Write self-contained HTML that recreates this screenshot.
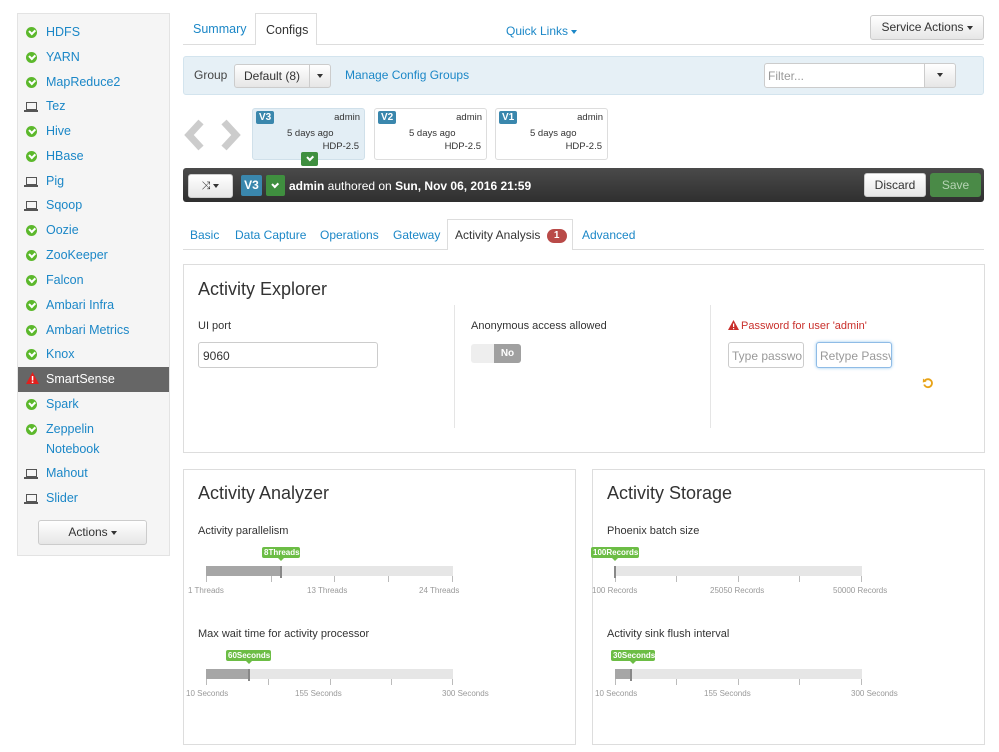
<!DOCTYPE html>
<html><head><meta charset="utf-8"><style>
*{box-sizing:border-box;margin:0;padding:0}
body{width:999px;height:752px;background:#fff;font-family:"Liberation Sans",sans-serif;font-size:12px;color:#333;position:relative;overflow:hidden}
.a{position:absolute}
.lk{color:#1b87c7}
.side{left:17px;top:13px;width:153px;height:543px;background:#f5f5f5;border:1px solid #e3e3e3}
.it{position:absolute;left:28px;font-size:12.5px;color:#1b87c7;white-space:nowrap}
.ok{position:absolute;left:8px;width:11px;height:11px;border-radius:50%;background:#5cb82c;margin-top:-1px}
.ok:after{content:"";position:absolute;left:3px;top:2px;width:4px;height:2.5px;border-left:2px solid #fff;border-bottom:2px solid #fff;transform:rotate(-45deg)}
.pc{position:absolute;left:8px;width:11px;height:8px;border:1.5px solid #555;border-bottom-width:1px}
.pc:after{content:"";position:absolute;left:-3px;top:7px;width:14px;height:1.5px;background:#555}
.btn{position:absolute;background:linear-gradient(#fff,#e6e6e6);border:1px solid #ccc;border-radius:3px;text-align:center;color:#333;font-size:12px}
.car{display:inline-block;width:0;height:0;border-left:3.5px solid transparent;border-right:3.5px solid transparent;border-top:4px solid #333;vertical-align:middle;margin-left:3px}
.ver{position:absolute;top:108px;width:113px;height:52px;border:1px solid #ddd;border-radius:3px;font-size:9.5px;background:#fff}
.vb{position:absolute;left:3px;top:2px;background:#3a87ad;color:#fff;font-weight:bold;font-size:10px;padding:1px 3px;border-radius:2px}
.panel{position:absolute;border:1px solid #ddd}
.h{position:absolute;font-size:18px;color:#333}
.lbl{position:absolute;font-size:11px;color:#333}
.inp{position:absolute;border:1px solid #ccc;border-radius:3px;background:#fff;font-size:12px;padding:6px 4px;color:#999}
.track{position:absolute;height:10px;background:#e6e6e6}
.fill{position:absolute;left:0;top:0;height:10px;background:#a6a6a6}
.tk{position:absolute;top:10px;width:1px;height:6px;background:#bbb}
.tl{position:absolute;font-size:8px;color:#999;white-space:nowrap}
.gb{position:absolute;height:11px;background:#6cbd45;color:#fff;font-size:8px;font-weight:bold;border-radius:2px;line-height:11px;text-align:center;padding:0 2px;white-space:nowrap}
.gb:after{content:"";position:absolute;left:50%;bottom:-3px;margin-left:-3px;border-left:3px solid transparent;border-right:3px solid transparent;border-top:3px solid #6cbd45}
</style></head><body>

<div class="a side">
<div class="ok" style="top:14px"></div><div class="it" style="top:11px">HDFS</div>
<div class="ok" style="top:39px"></div><div class="it" style="top:36px">YARN</div>
<div class="ok" style="top:64px"></div><div class="it" style="top:61px">MapReduce2</div>
<div class="pc" style="top:88px"></div><div class="it" style="top:85px">Tez</div>
<div class="ok" style="top:113px"></div><div class="it" style="top:110px">Hive</div>
<div class="ok" style="top:138px"></div><div class="it" style="top:135px">HBase</div>
<div class="pc" style="top:163px"></div><div class="it" style="top:160px">Pig</div>
<div class="pc" style="top:187px"></div><div class="it" style="top:184px">Sqoop</div>
<div class="ok" style="top:212px"></div><div class="it" style="top:209px">Oozie</div>
<div class="ok" style="top:237px"></div><div class="it" style="top:234px">ZooKeeper</div>
<div class="ok" style="top:262px"></div><div class="it" style="top:259px">Falcon</div>
<div class="ok" style="top:287px"></div><div class="it" style="top:284px">Ambari Infra</div>
<div class="ok" style="top:312px"></div><div class="it" style="top:309px">Ambari Metrics</div>
<div class="ok" style="top:336px"></div><div class="it" style="top:333px">Knox</div>
<div class="a" style="left:0;top:353px;width:151px;height:25px;background:#666"></div>
<svg class="a" style="left:8px;top:358px" width="13" height="12"><path d="M6.5 0 L13 12 L0 12Z" fill="#e0201d"/><rect x="5.8" y="4" width="1.5" height="4.5" fill="#fff"/><rect x="5.8" y="9.5" width="1.5" height="1.5" fill="#fff"/></svg>
<div class="it" style="top:358px;color:#fff">SmartSense</div>
<div class="ok" style="top:386px"></div><div class="it" style="top:383px">Spark</div>
<div class="ok" style="top:411px"></div><div class="it" style="top:408px">Zeppelin</div>
<div class="it" style="top:428px">Notebook</div>
<div class="pc" style="top:455px"></div><div class="it" style="top:452px">Mahout</div>
<div class="pc" style="top:480px"></div><div class="it" style="top:477px">Slider</div>
<div class="btn" style="left:20px;top:506px;width:109px;height:25px;line-height:23px">Actions<span class="car"></span></div>
</div>

<div class="a" style="left:183px;top:44px;width:801px;height:1px;background:#ddd"></div>
<div class="a lk" style="left:193px;top:22px;font-size:12.5px">Summary</div>
<div class="a" style="left:255px;top:13px;width:62px;height:32px;border:1px solid #ddd;border-bottom:none;background:#fff;font-size:12.5px;padding:9px 0 0 10px">Configs</div>
<div class="a lk" style="left:506px;top:24px;font-size:12px">Quick Links<span class="car" style="border-top-color:#1b87c7"></span></div>
<div class="btn" style="left:870px;top:15px;width:114px;height:25px;line-height:23px">Service Actions<span class="car"></span></div>

<div class="a" style="left:183px;top:56px;width:801px;height:39px;background:#e6f0f6;border:1px solid #d3e4ee;border-radius:3px"></div>
<div class="a" style="left:194px;top:68px;font-size:12px;color:#444">Group</div>
<div class="btn" style="left:234px;top:64px;width:76px;height:24px;line-height:22px;border-radius:3px 0 0 3px">Default (8)</div>
<div class="btn" style="left:309px;top:64px;width:22px;height:24px;line-height:20px;border-radius:0 3px 3px 0"><span class="car" style="margin:0"></span></div>
<div class="a lk" style="left:345px;top:68px">Manage Config Groups</div>
<div class="a inp" style="left:764px;top:63px;width:161px;height:25px;border-radius:3px 0 0 3px;padding:5px 3px">Filter...</div>
<div class="btn" style="left:924px;top:63px;width:32px;height:25px;line-height:21px;border-radius:0 3px 3px 0"><span class="car" style="margin:0"></span></div>

<svg class="a" style="left:183px;top:119px" width="60" height="34"><path d="M18 3 L6 16 L18 29" stroke="#ccc" stroke-width="7" fill="none"/><path d="M41 3 L53 16 L41 29" stroke="#ccc" stroke-width="7" fill="none"/></svg>
<div class="ver" style="left:252px;background:#e3eef5;border-color:#d0e0ea"><span class="vb">V3</span><span class="a" style="right:4px;top:3px">admin</span><span class="a" style="left:34px;top:19px">5 days ago</span><span class="a" style="right:5px;top:32px">HDP-2.5</span></div>
<div class="a" style="left:301px;top:152px;width:17px;height:14px;background:#3f8f3f;border-radius:2px"><div class="ok" style="left:3px;top:2px;background:none"></div></div>
<div class="ver" style="left:374px"><span class="vb">V2</span><span class="a" style="right:4px;top:3px">admin</span><span class="a" style="left:34px;top:19px">5 days ago</span><span class="a" style="right:5px;top:32px">HDP-2.5</span></div>
<div class="ver" style="left:495px"><span class="vb">V1</span><span class="a" style="right:4px;top:3px">admin</span><span class="a" style="left:34px;top:19px">5 days ago</span><span class="a" style="right:5px;top:32px">HDP-2.5</span></div>

<div class="a" style="left:183px;top:168px;width:801px;height:34px;background:linear-gradient(#4a4a4a,#2f2f2f);border-radius:3px"></div>
<div class="btn" style="left:188px;top:174px;width:45px;height:24px;line-height:22px;font-size:11px">⤨<span class="car"></span></div>
<div class="a" style="left:241px;top:175px;width:21px;height:21px;background:#3a87ad;color:#fff;font-weight:bold;font-size:12px;text-align:center;line-height:21px;border-radius:2px">V3</div>
<div class="a" style="left:266px;top:175px;width:19px;height:21px;background:#3f8f3f;border-radius:2px"><div class="ok" style="left:3px;top:6px;background:none"></div></div>
<div class="a" style="left:289px;top:179px;color:#fff;font-size:12px"><b>admin</b> authored on <b>Sun, Nov 06, 2016 21:59</b></div>
<div class="btn" style="left:864px;top:173px;width:62px;height:24px;line-height:22px">Discard</div>
<div class="a" style="left:930px;top:173px;width:51px;height:24px;background:#4a8a47;border-radius:3px;color:#b5d4b3;text-align:center;line-height:24px">Save</div>

<div class="a" style="left:183px;top:249px;width:801px;height:1px;background:#ddd"></div>
<div class="a lk" style="left:190px;top:228px">Basic</div>
<div class="a lk" style="left:235px;top:228px">Data Capture</div>
<div class="a lk" style="left:320px;top:228px">Operations</div>
<div class="a lk" style="left:393px;top:228px">Gateway</div>
<div class="a" style="left:447px;top:219px;width:126px;height:31px;border:1px solid #ddd;border-bottom:none;background:#fff;padding:8px 0 0 7px;white-space:nowrap">Activity Analysis <span style="display:inline-block;background:#b94a48;color:#fff;font-weight:bold;font-size:10px;border-radius:7px;width:20px;height:14px;line-height:14px;text-align:center;margin-left:3px;vertical-align:middle">1</span></div>
<div class="a lk" style="left:582px;top:228px">Advanced</div>

<div class="panel" style="left:183px;top:264px;width:802px;height:189px"></div>
<div class="h" style="left:198px;top:279px">Activity Explorer</div>
<div class="a" style="left:454px;top:305px;width:1px;height:123px;background:#e5e5e5"></div>
<div class="a" style="left:710px;top:305px;width:1px;height:123px;background:#e5e5e5"></div>
<div class="lbl" style="left:198px;top:320px">UI port</div>
<div class="inp" style="left:198px;top:342px;width:180px;height:26px;color:#333">9060</div>
<div class="lbl" style="left:471px;top:320px">Anonymous access allowed</div>
<div class="a" style="left:471px;top:344px;width:50px;height:19px;background:#eee;border-radius:3px"></div>
<div class="a" style="left:494px;top:344px;width:27px;height:19px;background:#a0a0a0;border-radius:0 3px 3px 0;color:#fff;font-size:10px;font-weight:bold;text-align:center;line-height:19px">No</div>
<svg class="a" style="left:728px;top:320px" width="11" height="10"><path d="M5.5 0 L11 10 L0 10Z" fill="#c9302c"/><rect x="5" y="3.5" width="1.2" height="3.5" fill="#fff"/><rect x="5" y="8" width="1.2" height="1.2" fill="#fff"/></svg>
<div class="lbl" style="left:741px;top:320px;color:#c9302c">Password for user 'admin'</div>
<div class="inp" style="left:728px;top:342px;width:76px;height:26px;padding:6px 3px;overflow:hidden;white-space:nowrap">Type passwo</div>
<div class="inp" style="left:816px;top:342px;width:76px;height:26px;padding:6px 3px;border-color:#8fbce6;box-shadow:0 0 3px #9ac8ef;overflow:hidden;white-space:nowrap">Retype Passv</div>
<svg class="a" style="left:922px;top:377px" width="12" height="12"><path d="M3 3.5 A4 4 0 1 1 2.2 7.5" stroke="#e8a317" stroke-width="1.8" fill="none"/><path d="M1 1.5 L4.5 4.5 L0.8 5.5Z" fill="#e8a317"/></svg>

<div class="panel" style="left:183px;top:469px;width:393px;height:276px"></div>
<div class="h" style="left:198px;top:483px">Activity Analyzer</div>
<div class="lbl" style="left:198px;top:525px">Activity parallelism</div>
<div class="gb" style="left:262px;top:547px;width:38px">8Threads</div>
<div class="track" style="left:206px;top:566px;width:247px"><div class="fill" style="width:75px"></div><div class="tk" style="left:0"></div><div class="tk" style="left:65px"></div><div class="tk" style="left:128px"></div><div class="tk" style="left:182px"></div><div class="tk" style="left:246px"></div></div>
<div class="a" style="left:280px;top:566px;width:2px;height:12px;background:#888"></div>
<div class="tl" style="left:188px;top:586px">1 Threads</div><div class="tl" style="left:307px;top:586px">13 Threads</div><div class="tl" style="left:419px;top:586px">24 Threads</div>
<div class="lbl" style="left:198px;top:628px">Max wait time for activity processor</div>
<div class="gb" style="left:226px;top:650px;width:45px">60Seconds</div>
<div class="track" style="left:206px;top:669px;width:247px"><div class="fill" style="width:43px"></div><div class="tk" style="left:0"></div><div class="tk" style="left:62px"></div><div class="tk" style="left:124px"></div><div class="tk" style="left:185px"></div><div class="tk" style="left:246px"></div></div>
<div class="a" style="left:248px;top:669px;width:2px;height:12px;background:#888"></div>
<div class="tl" style="left:186px;top:689px">10 Seconds</div><div class="tl" style="left:295px;top:689px">155 Seconds</div><div class="tl" style="left:442px;top:689px">300 Seconds</div>

<div class="panel" style="left:592px;top:469px;width:393px;height:276px"></div>
<div class="h" style="left:607px;top:483px">Activity Storage</div>
<div class="lbl" style="left:607px;top:525px">Phoenix batch size</div>
<div class="gb" style="left:591px;top:547px;width:48px">100Records</div>
<div class="track" style="left:615px;top:566px;width:247px"><div class="tk" style="left:0"></div><div class="tk" style="left:61px"></div><div class="tk" style="left:123px"></div><div class="tk" style="left:184px"></div><div class="tk" style="left:246px"></div></div>
<div class="a" style="left:614px;top:566px;width:2px;height:12px;background:#888"></div>
<div class="tl" style="left:592px;top:586px">100 Records</div><div class="tl" style="left:710px;top:586px">25050 Records</div><div class="tl" style="left:833px;top:586px">50000 Records</div>
<div class="lbl" style="left:607px;top:628px">Activity sink flush interval</div>
<div class="gb" style="left:611px;top:650px;width:44px">30Seconds</div>
<div class="track" style="left:615px;top:669px;width:247px"><div class="fill" style="width:16px"></div><div class="tk" style="left:0"></div><div class="tk" style="left:61px"></div><div class="tk" style="left:123px"></div><div class="tk" style="left:184px"></div><div class="tk" style="left:246px"></div></div>
<div class="a" style="left:630px;top:669px;width:2px;height:12px;background:#888"></div>
<div class="tl" style="left:595px;top:689px">10 Seconds</div><div class="tl" style="left:704px;top:689px">155 Seconds</div><div class="tl" style="left:851px;top:689px">300 Seconds</div>

</body></html>
